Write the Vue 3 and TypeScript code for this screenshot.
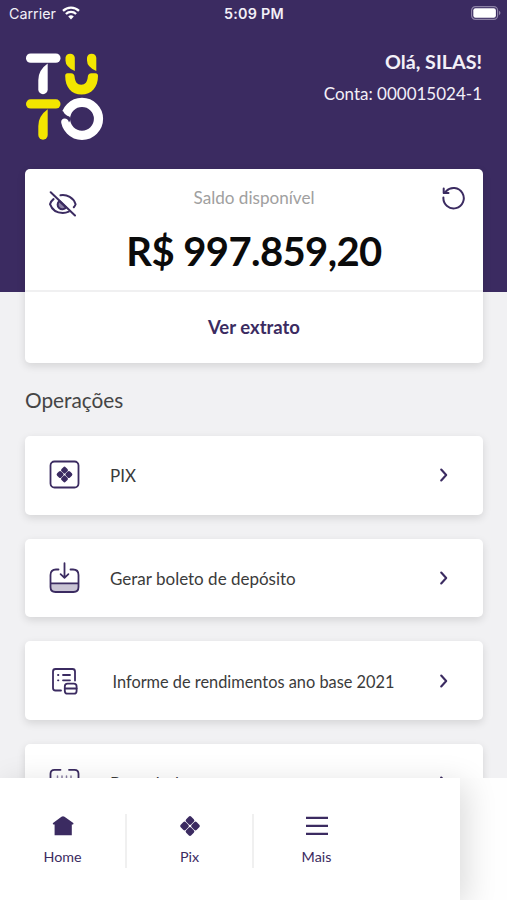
<script setup lang="ts">
type OperationIcon = 'pix' | 'deposit' | 'report' | 'barcode'

interface Operation {
  icon: OperationIcon
  label: string
}

const operations: Operation[] = [
  { icon: 'pix', label: 'PIX' },
  { icon: 'deposit', label: 'Gerar boleto de depósito' },
  { icon: 'report', label: 'Informe de rendimentos ano base 2021' },
  { icon: 'barcode', label: 'Pagar boleto' },
]
</script>

<template>
  <div class="screen">
    <main class="content">
      <header class="hero">
        <div class="status">
          <div class="carrier">
            <span>Carrier</span>
            <svg class="wifi" viewBox="0 0 18 14">
              <path d="M1 4.9a11.6 11.6 0 0 1 16 0" />
              <path d="M3.9 8a7.4 7.4 0 0 1 10.2 0" />
              <path class="fill" d="M6.2 10.5a4.1 4.1 0 0 1 5.6 0L9 13.4z" />
            </svg>
          </div>
          <span class="clock">5:09 PM</span>
          <svg class="battery" viewBox="0 0 30 14">
            <rect class="shell" x=".6" y=".6" width="26" height="12.8" rx="3.8" />
            <rect class="charge" x="2.3" y="2.3" width="22.6" height="9.4" rx="2.2" />
            <path class="tip" d="M28 4.8q3 2.2 0 4.4z" />
          </svg>
        </div>
        <div class="identity">
          <svg class="logo" viewBox="0 0 78 88">
            <g class="white">
              <rect x="0" y=".5" width="34.5" height="9.3" rx="4.6" />
              <path d="M21.7 10.5V36.5a4.7 4.7 0 0 1-9.4 0V27q0-10 9.4-16.5z" />
            </g>
            <g class="yellow">
              <path d="M39.5 4.7a4.7 4.7 0 0 1 9.3 0V18q-9.3-4-9.3-10.5z" />
              <path d="M61 4.7a4.7 4.7 0 0 1 9.3 0V18Q61 14 61 7.5z" />
              <path d="M41.5 20.300h3.500q3.300 0 3.600 3.500c.4 5 2.600 8 6.600 8s6.200-3 6.600-8q.3-3.500 3.600-3.500h4q2.600 0 2.600 2.800C72 34.500 65.500 41.600 55.500 41.600S39.200 34.500 39.200 23.100q0-2.800 2.300-2.800z" />
              <rect x="0" y="46.300" width="34.500" height="9.300" rx="4.600" />
              <path d="M21.700 56.300V82a4.700 4.700 0 0 1-9.400 0V73q0-10 9.400-16.700z" />
            </g>
            <circle class="ring" cx="56" cy="65.800" r="16.500" />
            <path class="notch" d="M32 56l5.300 2.500q1.500 3.700 6 5.100l1.700 2.400-2 3.500q-1-3.800-4.500-4-3 .2-3.500 3.500L32 69z" />
          </svg>
          <div class="account">
            <strong>Olá, SILAS!</strong>
            <span>Conta: 000015024-1</span>
          </div>
        </div>
      </header>

      <section class="balance">
        <div class="balance-top">
          <svg class="eye" viewBox="0 0 28 26">
            <path d="M4.500 8.100Q1.800 10.200 1 13.200c2 5.500 6.900 8.800 12.800 8.800 2.200 0 4.200-.5 6-1.300M11.500 4.300c6.500-1 13 2.200 15.100 8.900q-.6 1.800-1.800 3.100" />
            <path class="iris" d="M10.300 10a4.700 4.700 0 1 0 6.800 6.400z" />
            <path class="slash" d="M1.700 1.300l24.300 23.200" />
          </svg>
          <div class="figures">
            <span class="caption">Saldo disponível</span>
            <strong class="amount">R$ 997.859,20</strong>
          </div>
          <svg class="refresh" viewBox="0 0 24 24">
            <path d="M1.400 11.600A10.200 10.200 0 1 0 4 5.400L2 7" />
            <path class="head" d="M1.700 2.500V7h4.800" />
          </svg>
        </div>
        <a class="statement">Ver extrato</a>
      </section>

      <h2 class="heading">Operações</h2>

      <ul class="operations">
        <li v-for="op in operations" :key="op.icon" class="operation" :class="op.icon">
          <svg class="op-icon" viewBox="0 0 32 32">
            <g v-if="op.icon === 'pix'">
              <rect x="1.500" y="2.500" width="28" height="26" rx="4" />
              <g class="solid" transform="translate(15.500 15.500) rotate(45)">
                <rect x="-6" y="-6" width="5.800" height="5.800" rx="1.600" />
                <rect x=".2" y="-6" width="5.800" height="5.800" rx="1.600" />
                <rect x="-6" y=".2" width="5.800" height="5.800" rx="1.600" />
                <rect x=".2" y=".2" width="5.800" height="5.800" rx="1.600" />
              </g>
            </g>
            <g v-else-if="op.icon === 'deposit'">
              <path class="tray" d="M1.500 21.500h28v3.500q0 5-5 5h-18q-5 0-5-5z" />
              <path d="M9.500 7.500H7q-5.500 0-5.500 5.500v12q0 5 5 5h18q5 0 5-5V13q0-5.500-5.500-5.500h-2.500M1.500 21.300h28M15.500 1.200v14.300M11.600 12.200l3.900 3.600 3.900-3.600" />
            </g>
            <g v-else-if="op.icon === 'report'">
              <path d="M12 25.500H6.500q-2.500 0-2.500-2.500V6.500Q4 4 6.500 4h17Q26 4 26 6.500v9M14 10h7M14 15.300h7M9 10h.4M9 15.300h.4" />
              <rect x="15.800" y="18.700" width="11.800" height="10" rx="2.800" />
              <path d="M15.800 23.500h11.800" />
            </g>
            <g v-else>
              <path d="M11.500 2.800H5.500Q1.500 2.800 1.500 6.800V12M20 2.800h5.500q4 0 4 4V12M1.500 20v5q0 4 4 4H12M29.500 20v5q0 4-4 4H20" />
              <path class="bars" d="M8.500 9v14M13 9v14M17.500 9v14M22 9v14" />
            </g>
          </svg>
          <span class="op-label">{{ op.label }}</span>
          <svg class="chevron" viewBox="0 0 10 16">
            <path d="M2.200 2.500l5 5.500-5 5.500" />
          </svg>
        </li>
      </ul>
    </main>

    <nav class="tabs">
      <a class="tab">
        <svg viewBox="0 0 24 24">
          <path class="solid" d="M12 2.200q.7 0 1.500.6L22.300 9q.6 1.200-.4 1.600H20.800V21.200H3.600V10.600H2.500Q1.300 10.200 2 9l8.500-6.200q.8-.6 1.500-.6z" />
        </svg>
        <span>Home</span>
      </a>
      <a class="tab">
        <svg viewBox="0 0 24 24">
          <g class="solid" transform="translate(12 12) rotate(45)">
            <rect x="-7.500" y="-7.500" width="7.250" height="7.250" rx="1.900" />
            <rect x=".25" y="-7.500" width="7.250" height="7.250" rx="1.900" />
            <rect x="-7.500" y=".25" width="7.250" height="7.250" rx="1.900" />
            <rect x=".25" y=".25" width="7.250" height="7.250" rx="1.900" />
          </g>
        </svg>
        <span>Pix</span>
      </a>
      <a class="tab">
        <svg viewBox="0 0 24 24">
          <path class="menu" d="M1 3.800h22M1 11.800h22M1 19.800h22" />
        </svg>
        <span>Mais</span>
      </a>
    </nav>
  </div>
</template>

<style>
body {
  margin: 0;
}
</style>

<style scoped>
.screen {
  display: flex;
  flex-direction: column;
  width: 507px;
  height: 900px;
  overflow: hidden;
  background: #fefefe;
  font-family: Lato, "Liberation Sans", sans-serif;
  color: #3b3b3b;
}

svg {
  display: block;
  flex: none;
  fill: none;
  stroke: #3b2b61;
  stroke-width: 1.8;
  stroke-linecap: round;
  stroke-linejoin: round;
}

.solid {
  fill: #3b2b61;
  stroke: none;
}

.content {
  flex: none;
  box-sizing: border-box;
  height: 778px;
  overflow: hidden;
  background: #f1f1f3;
}

.hero {
  box-sizing: border-box;
  height: 291.500px;
  background: #3b2b61;
  color: #f3f0f8;
}

.status {
  display: grid;
  grid-template-columns: 1fr auto 1fr;
  align-items: center;
  height: 27px;
  padding: 0 6px 0 9px;
  font-family: Inter, "Liberation Sans", sans-serif;
  font-size: 14.300px;
}

.carrier {
  display: flex;
  align-items: center;
  gap: 6px;
}

.wifi {
  width: 18px;
  height: 14px;
  margin-top: -2px;
  stroke: #fff;
  stroke-width: 2.300;
  stroke-linecap: butt;
}

.wifi .fill {
  fill: #fff;
  stroke: none;
}

.clock {
  margin-left: -2px;
  font-weight: 600;
  letter-spacing: 0.300px;
}

.battery {
  width: 30px;
  height: 14px;
  margin-top: -1px;
  justify-self: end;
}

.shell {
  stroke: #8d82a6;
  stroke-width: 1.200;
}

.charge {
  fill: #fff;
  stroke: none;
}

.tip {
  fill: #8d82a6;
  stroke: none;
}

.identity {
  display: flex;
  justify-content: space-between;
  padding: 26px 25px 0 26px;
}

.logo {
  width: 78px;
  height: 88px;
  stroke: none;
}

.white {
  fill: #fff;
}

.yellow {
  fill: #f3e600;
}

.ring {
  stroke: #fff;
  stroke-width: 9.200;
}

.notch {
  fill: #3b2b61;
}

.account {
  display: flex;
  flex-direction: column;
  align-items: flex-end;
  font-size: 17px;
  line-height: 24px;
}

.account strong {
  margin: -3px 0 8px;
  font-size: 19.700px;
}

.balance {
  box-sizing: border-box;
  width: 458px;
  height: 194px;
  margin: -122.500px 0 0 25px;
  border-radius: 5px;
  background: #fff;
  box-shadow: 0 3px 8px rgba(0, 0, 0, 0.120);
}

.balance-top {
  box-sizing: border-box;
  display: grid;
  grid-template-columns: 1fr auto 1fr;
  height: 122.500px;
  padding: 17px 17px 0 24px;
  border-bottom: 2px solid #f0f0f1;
}

.eye {
  width: 28px;
  height: 26px;
  margin-top: 5px;
  stroke-width: 2;
}

.iris {
  fill: #8d82a6;
}

.refresh {
  width: 24px;
  height: 24px;
  justify-self: end;
  stroke-width: 2;
}

.figures {
  display: flex;
  flex-direction: column;
  align-items: center;
  margin-left: -7px;
}

.caption {
  font-size: 17.100px;
  line-height: 24px;
  color: #a0a0a0;
}

.amount {
  margin-top: 15px;
  font-size: 40px;
  line-height: 52px;
  letter-spacing: -0.600px;
  color: #0b0b0b;
}

.statement {
  display: flex;
  align-items: center;
  justify-content: center;
  height: 70px;
  font-size: 18.500px;
  font-weight: 700;
  color: #3b2b61;
}

.heading {
  margin: 24px 0 23.200px 25px;
  font-size: 20.800px;
  font-weight: 400;
  line-height: 26px;
  color: #454545;
}

.operations {
  display: grid;
  gap: 24px;
  margin: 0;
  padding: 0 24px 0 25px;
  list-style: none;
}

.operation {
  box-sizing: border-box;
  display: flex;
  align-items: center;
  height: 78.600px;
  padding: 0 34px 0 24px;
  border-radius: 5px;
  background: #fff;
  box-shadow: 0 3px 8px rgba(0, 0, 0, 0.120);
}

.op-icon {
  width: 32px;
  height: 32px;
}

.tray {
  fill: #c9c4d4;
  stroke: none;
}

.bars {
  stroke: #8d82a6;
  stroke-width: 1.500;
}

.op-label {
  flex: 1;
  margin: 2px 0 0 29px;
  font-size: 17px;
  line-height: 24px;
  white-space: nowrap;
}

.report .op-label {
  margin-top: 3px;
  margin-left: 31.500px;
  font-size: 16.350px;
}

.barcode .op-label {
  margin-top: 1.500px;
}

.chevron {
  width: 10px;
  height: 16px;
  stroke-width: 2.100;
}

.tabs {
  position: relative;
  box-sizing: border-box;
  display: flex;
  flex: none;
  width: 460px;
  height: 122px;
  padding-top: 36px;
  background: #fff;
  box-shadow: 6px 6px 30px rgba(0, 0, 0, 0.140);
}

.tab {
  box-sizing: border-box;
  display: flex;
  flex-direction: column;
  align-items: center;
  gap: 9px;
  width: 127px;
  height: 54px;
  border-right: 2px solid #f0f0f0;
  font-size: 14.300px;
  line-height: 20px;
  color: #3b2b61;
}

.tab:last-child {
  border-right-color: transparent;
}

.tab svg {
  width: 24px;
  height: 24px;
}

.menu {
  stroke-width: 2.200;
  stroke-linecap: butt;
}
</style>
